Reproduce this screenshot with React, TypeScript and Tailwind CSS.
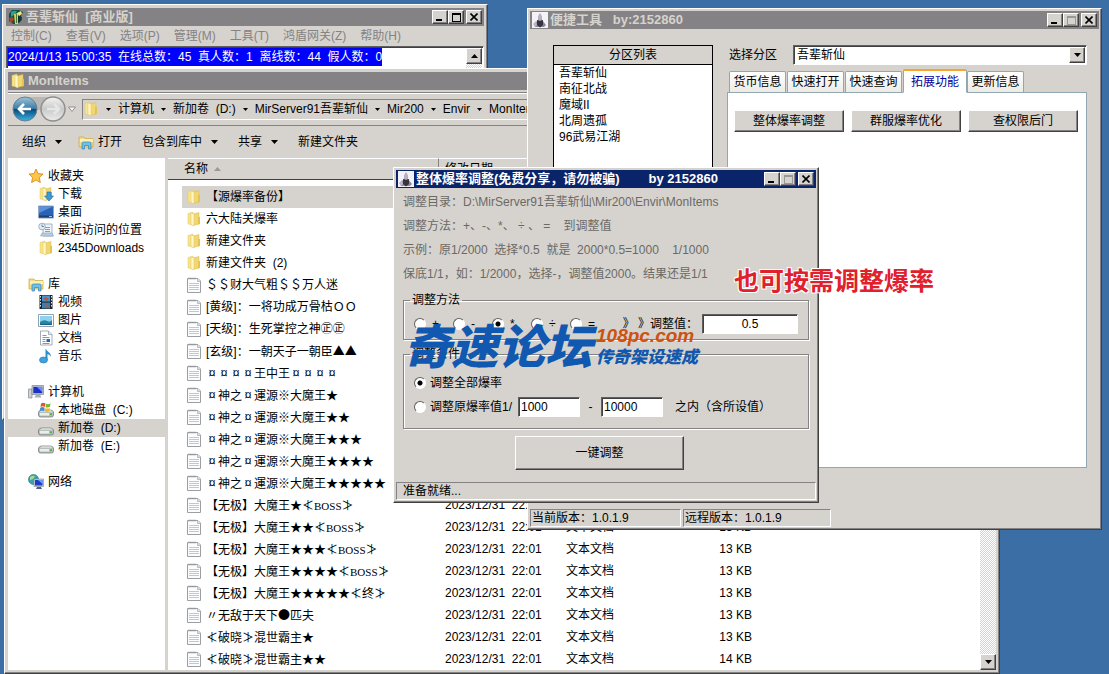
import { Fragment, useState } from "react";
import type { ReactNode } from "react";

const RAISED =
  "border border-t-white border-l-white border-r-[#404040] border-b-[#404040] bg-[#d6d3ce] shadow-[inset_-1px_-1px_0_#848284]";
const SUNKEN =
  "border border-t-[#606060] border-l-[#606060] border-r-white border-b-white bg-white shadow-[inset_1px_1px_0_#404040]";
const STATUS_CELL =
  "border border-t-[#848284] border-l-[#848284] border-r-white border-b-white";
const ETCHED =
  "border border-[#848284] shadow-[1px_1px_0_#fff,inset_1px_1px_0_#fff]";
const SCROLL_TRACK =
  "bg-[#e9e7e3] bg-[repeating-conic-gradient(#d6d3ce_0_25%,#fff_0_50%)] bg-size-[2px_2px]";

const MENUS = ["控制(C)", "查看(V)", "选项(P)", "管理(M)", "工具(T)", "鸿盾网关(Z)", "帮助(H)"];
const CRUMBS = ["计算机", "新加卷  (D:)", "MirServer91吾辈斩仙", "Mir200", "Envir", "MonItems"];
const ZONES = ["吾辈斩仙", "南征北战", "魔域II", "北周遗孤", "96武易江湖"];
const TABS = ["货币信息", "快速打开", "快速查询", "拓展功能", "更新信息"];
const TOOLS = ["整体爆率调整", "群服爆率优化", "查权限后门"];
const OPERATORS = ["+", "-", "*", "÷", "="];
const HINTS = [
  "调整目录：D:\\MirServer91吾辈斩仙\\Mir200\\Envir\\MonItems",
  "调整方法：+、-、*、 ÷ 、 =    到调整值",
  "示例：原1/2000  选择*0.5  就是  2000*0.5=1000    1/1000",
  "保底1/1，如：1/2000，选择-，调整值2000。结果还是1/1",
];

interface FileRow {
  name: string;
  folder?: boolean;
  size: string;
}

const FILES: FileRow[] = [
  { name: "【源爆率备份】", folder: true, size: "" },
  { name: "六大陆关爆率", folder: true, size: "" },
  { name: "新建文件夹", folder: true, size: "" },
  { name: "新建文件夹  (2)", folder: true, size: "" },
  { name: "＄＄财大气粗＄＄万人迷", size: "13 KB" },
  { name: "[黄级]：一将功成万骨枯ＯＯ", size: "13 KB" },
  { name: "[天级]：生死掌控之神㊣㊣", size: "13 KB" },
  { name: "[玄级]：一朝天子一朝臣▲▲", size: "13 KB" },
  { name: "¤¤¤¤王中王¤¤¤¤", size: "13 KB" },
  { name: "¤神之¤運源※大魔王★", size: "13 KB" },
  { name: "¤神之¤運源※大魔王★★", size: "13 KB" },
  { name: "¤神之¤運源※大魔王★★★", size: "13 KB" },
  { name: "¤神之¤運源※大魔王★★★★", size: "13 KB" },
  { name: "¤神之¤運源※大魔王★★★★★", size: "13 KB" },
  { name: "【无极】大魔王★≮BOSS≯", size: "13 KB" },
  { name: "【无极】大魔王★★≮BOSS≯", size: "13 KB" },
  { name: "【无极】大魔王★★★≮BOSS≯", size: "13 KB" },
  { name: "【无极】大魔王★★★★≮BOSS≯", size: "13 KB" },
  { name: "【无极】大魔王★★★★★≮终≯", size: "13 KB" },
  { name: "〃无敌于天下●匹夫", size: "13 KB" },
  { name: "≮破晓≯混世霸主★", size: "13 KB" },
  { name: "≮破晓≯混世霸主★★", size: "14 KB" },
];

type IconName =
  | "star" | "download" | "desktop" | "recent" | "folder" | "library" | "video"
  | "picture" | "document" | "music" | "computer" | "system" | "drive" | "network";

interface NavItem {
  label: string;
  icon: IconName;
}

const NAV: { root: NavItem; children: NavItem[] }[] = [
  {
    root: { label: "收藏夹", icon: "star" },
    children: [
      { label: "下载", icon: "download" },
      { label: "桌面", icon: "desktop" },
      { label: "最近访问的位置", icon: "recent" },
      { label: "2345Downloads", icon: "folder" },
    ],
  },
  {
    root: { label: "库", icon: "library" },
    children: [
      { label: "视频", icon: "video" },
      { label: "图片", icon: "picture" },
      { label: "文档", icon: "document" },
      { label: "音乐", icon: "music" },
    ],
  },
  {
    root: { label: "计算机", icon: "computer" },
    children: [
      { label: "本地磁盘  (C:)", icon: "system" },
      { label: "新加卷  (D:)", icon: "drive" },
      { label: "新加卷  (E:)", icon: "drive" },
    ],
  },
  { root: { label: "网络", icon: "network" }, children: [] },
];

const folderShape = (
  <>
    <path d="M2 2.500 7 1v13l-5-1z" fill="#f7e48f" stroke="#e3c75e" strokeWidth=".5" />
    <path d="M7 3l6-1.500V13l-6 1.500z" fill="#f0d774" stroke="#d9b850" strokeWidth=".5" />
    <path d="M5 2l3 1v12l-3-1.500z" fill="#fff6c4" stroke="#e0c460" strokeWidth=".5" />
    <path d="M12 6h2v7l-2 .5z" fill="#e6c24e" />
  </>
);

const libraryShape = (
  <>
    <path d="M1 3h5l1 1.500h8V13H1z" fill="#f3dc83" stroke="#c9a742" strokeWidth=".7" />
    <path d="M2 5h13v3H2z" fill="#fbf0b8" />
    <path d="M4 15V9.500q0-1.500 1.500-1.500h6q1.500 0 1.500 1.500V15h-2.500v-3.500h-4V15z" fill="#6fc0ea" stroke="#3583b5" strokeWidth=".7" />
  </>
);

const driveShape = (
  <>
    <path d="M.5 10q1-2 3-2h9q2 0 3 2v3q0 2-2 2h-11q-2 0-2-2z" fill="#b9bfbc" stroke="#6d7370" strokeWidth=".7" />
    <path d="M2 9.500q1-1 2-1h9l1.500 1z" fill="#f1f3f2" />
    <path d="M2 11h9v2.500H2z" fill="#eceeed" />
    <circle cx="13" cy="12.300" r="1" fill="#3fae3c" />
  </>
);

const ICONS: Record<IconName, ReactNode> = {
  star: (
    <path d="M8 1l2 4.600 5 .5-3.700 3.400 1 5L8 12l-4.400 2.500 1-5L1 6.100l5-.5z" fill="#fdc54a" stroke="#dc8a1c" strokeWidth=".9" />
  ),
  download: (
    <>
      {folderShape}
      <path d="M9 6h4v4h2.500L11 15 6.500 10H9z" fill="#3d9ad6" stroke="#1e6ba5" strokeWidth=".6" />
    </>
  ),
  desktop: (
    <>
      <path d="M.5 2h15v12H.5z" fill="#2b62b5" stroke="#94a8c2" />
      <path d="M1 2.500h14L1 9z" fill="#5c92da" />
      <path d="M1 11.500h14v2H1z" fill="#1d3e74" />
      <path d="M11 12h3v1h-3z" fill="#9dc2ee" />
    </>
  ),
  recent: (
    <>
      <path d="M5 2h9v9l1 3H5z" fill="#eef4fa" stroke="#8ca3ba" strokeWidth=".8" />
      <path d="M7 5h5v1H7zm0 2h5v1H7zm0 2h5v1H7z" fill="#7fa0c4" />
      <circle cx="4" cy="4.500" r="3.300" fill="#e4edf4" stroke="#8ca3ba" strokeWidth=".8" />
      <path d="M4 2.500v2h2" fill="none" stroke="#44617f" strokeWidth=".7" />
      <path d="M4 11h10l1.500 3H2.500z" fill="#b9cde0" stroke="#8ca3ba" strokeWidth=".6" />
    </>
  ),
  folder: folderShape,
  library: libraryShape,
  video: (
    <>
      <path d="M1.500 1h13v14h-13z" fill="#1b242c" />
      <path d="M4 1.500h8v6H4z" fill="#4996cc" />
      <path d="M4 8.500h8v6H4z" fill="#397fb0" />
      <path d="M5 5l3-2 3 2.500L9 7zM5 12l3-2 3 3z" fill="#b9573f" />
      <path d="M2 2h1v1.500H2zm0 3h1v1.500H2zm0 3h1v1.500H2zm0 3h1v1.500H2zM13 2h1v1.500h-1zm0 3h1v1.500h-1zm0 3h1v1.500h-1zm0 3h1v1.500h-1z" fill="#dfe6ea" />
    </>
  ),
  picture: (
    <>
      <path d="M.5 2.500h15v12H.5z" fill="#fff" stroke="#8fa3b0" />
      <path d="M2 4h12v9H2z" fill="#8fd0f0" />
      <path d="M2 10q4-3 7-1t5-1v5H2z" fill="#24889b" />
      <path d="M2 12h12v1H2z" fill="#1d5d88" />
    </>
  ),
  document: (
    <>
      <path d="M2.500 1h8l3.500 3.500V15H2.500z" fill="#fff" stroke="#8b98a5" strokeWidth=".8" />
      <path d="M10.500 1v3.500H14" fill="#dfe7ee" stroke="#8b98a5" strokeWidth=".7" />
      <path d="M4.500 5h4v1h-4zm0 2h7v1h-7zm0 2h3v1h-3zm0 2h3v1h-3zm0 2h7v1h-7z" fill="#6f9bd0" />
      <path d="M8.500 9H12v3H8.500z" fill="#2b68a8" />
    </>
  ),
  music: (
    <>
      <path d="M8 1c1 3 5 3 5 8-1-2-2-2.500-3.500-3v6h-2V1z" fill="#2d8ecb" />
      <ellipse cx="5.500" cy="12" rx="4" ry="3" fill="#3ea2dc" stroke="#1f72ab" strokeWidth=".6" />
    </>
  ),
  computer: (
    <>
      <path d="M.5 5H4v9H.5z" fill="#cfd2d6" stroke="#83888e" strokeWidth=".7" />
      <path d="M4 1.500h11.500v9H4z" fill="#c9ced5" stroke="#7e858e" strokeWidth=".7" />
      <path d="M5.300 2.800h9v6.400h-9z" fill="#1b2fc9" />
      <path d="M9 3h5v5z" fill="#6f8ff3" />
      <path d="M8 10.500h4l1.500 3h-7z" fill="#a9aeb5" />
    </>
  ),
  system: (
    <>
      {driveShape}
      <path d="M3 1.500q2-1.500 4.500 0L7 5q-2-1.500-4.500 0z" fill="#e2562b" />
      <path d="M8.200 1.800q2 1 4.300-.5L12 4.800q-2 1.200-4.300.4z" fill="#77b82f" />
      <path d="M2.300 5.800q2.200-1.500 4.400 0L6 9.200q-2-1.200-4.400 0z" fill="#3a8fd8" />
      <path d="M7.600 6q2 1.200 4.200 0l-.6 3.200q-2 1-4.200 0z" fill="#f3b820" />
    </>
  ),
  drive: driveShape,
  network: (
    <>
      <circle cx="5.500" cy="5.500" r="5" fill="#36a4b4" stroke="#1a6f7b" strokeWidth=".6" />
      <path d="M2 3q3-2 5-1L5 5 2 6zm4 4l3-1v3l-3 1z" fill="#a6dd8c" />
      <path d="M6 5h9.500v7.500H6z" fill="#cdd3da" stroke="#7e858e" strokeWidth=".6" />
      <path d="M7 6h7.500v5.500H7z" fill="#1b3bc9" />
      <path d="M10 6h4.500v4z" fill="#6fa0f3" />
      <path d="M9 13h4l1 2H8z" fill="#4b5f86" />
    </>
  ),
};

const Icon = ({ name }: { name: IconName }) => (
  <svg className="size-4 shrink-0" viewBox="0 0 16 16" aria-hidden="true">
    {ICONS[name]}
  </svg>
);

const TextFileIcon = () => (
  <svg className="size-4 shrink-0" viewBox="0 0 16 16" aria-hidden="true">
    <path d="M1.500 1.500H12L14.500 4v11.500h-13z" fill="#fbfcfd" stroke="#9b9fa3" />
    <path d="M11.500 1.500v3h3" fill="#dcdfe2" stroke="#a5a9ad" strokeWidth=".7" />
    <path d="M3 6.500h10M3 8.500h10M3 10.500h10M3 12.500h10" stroke="#c0c7d6" />
    <path d="M3 .5v2M5 .5v2M7 .5v2M9 .5v2" stroke="#8d9093" strokeWidth=".8" />
  </svg>
);

const HeroIcon = () => (
  <svg className="size-4 shrink-0 bg-[#f4f2f6]" viewBox="0 0 16 16" aria-hidden="true">
    <path d="M8 1l1.500 3 .5 4 4 5-2 2H3l-1-3 4-4 .5-4z" fill="#8c8799" />
    <path d="M7 2h2l1 5-2 2-2-2z" fill="#b9b1c0" />
    <path d="M5 8l3 1 3-1v5l-3 2.500L5 13z" fill="#37333f" />
    <path d="M1 12l3-3 1 4-2 2z" fill="#bdb2cc" />
  </svg>
);

const ServerIcon = () => (
  <svg className="size-4 shrink-0" viewBox="0 0 16 16" aria-hidden="true">
    <path d="M4 1h7l4 2-2 4 1 4-5 4H5L1 12V5z" fill="#0c4f4c" />
    <path d="M3 3q3-2 6-1L6 6 3 8z" fill="#2f9d93" />
    <path d="M6 5l4-1v11H7z" fill="#e3cf4a" />
    <path d="M9 4l4-2 1 3-3 2z" fill="#f0e878" />
    <path d="M1 9l4-1 1 3-2 1 1 2-3-1z" fill="#a5482e" />
    <path d="M10 7l4 1-2 5-2 1z" fill="#16302c" />
    <path d="M8 5h1v9H8z" fill="#4d7a2a" />
  </svg>
);

const Triangle = ({ up = false, small = false }: { up?: boolean; small?: boolean }) => (
  <svg
    className={small ? "h-[3px] w-[5px] shrink-0" : "h-1 w-[7px] shrink-0"}
    viewBox="0 0 7 4"
    aria-hidden="true"
  >
    <path d={up ? "M0 4h7L3.500 0z" : "M0 0h7L3.500 4z"} fill="#000" />
  </svg>
);

// Symbols whose Latin glyph is narrow, but which take a full cell in a file name
const FULL_CELL = /([¤▲●≮≯])/;

const FileName = ({ name }: { name: string }) => (
  <span className="whitespace-pre">
    {name.split(FULL_CELL).map((part, index) =>
      FULL_CELL.test(part) ? (
        <span key={index} className="inline-block w-3 text-center font-['Noto_Sans_CJK_SC',sans-serif]">
          {part}
        </span>
      ) : (
        <span key={index} className={part === "BOSS" ? "font-['Liberation_Serif',serif] text-[11px]" : ""}>
          {part}
        </span>
      ),
    )}
  </span>
);

interface TitleBarProps {
  title: string;
  icon: ReactNode;
  active?: boolean;
  canMaximize?: boolean;
  controls?: boolean;
}

const TitleBar = ({ title, icon, active, canMaximize, controls = true }: TitleBarProps) => {
  const button = `${RAISED} flex h-[14px] w-4 items-center justify-center`;
  return (
    <header
      className={`flex h-[18px] items-center gap-0.5 px-0.5 ${
        active ? "bg-[#0a246a] text-white" : "bg-[#848284] text-[#d6d3ce]"
      }`}
    >
      {icon}
      <h2 className="flex-1 truncate whitespace-pre text-[13px] leading-[18px] font-bold">{title}</h2>
      {controls ? (
        <div className="flex">
          <button type="button" aria-label="最小化" className={button}>
            <svg className="size-2" viewBox="0 0 8 8"><path d="M0 6h6v2H0z" /></svg>
          </button>
          <button type="button" aria-label="最大化" disabled={!canMaximize} className={button}>
            <svg className="size-[9px]" viewBox="0 0 9 9">
              <path
                d="M0 0h9v9H0zM1 2v6h7V2z"
                fillRule="evenodd"
                fill={canMaximize ? "#000" : "#9a9794"}
              />
            </svg>
          </button>
          <button type="button" aria-label="关闭" className={`${button} ml-0.5`}>
            <svg className="size-2" viewBox="0 0 8 8">
              <path d="M.5 .5l7 7M7.500 .5l-7 7" stroke="#000" strokeWidth="1.600" />
            </svg>
          </button>
        </div>
      ) : null}
    </header>
  );
};

const LogWindow = () => (
  <section className={`${RAISED} absolute top-1 left-0.5 flex h-[416px] w-[486px] flex-col p-[3px]`}>
    <TitleBar title="吾辈斩仙  [商业版]" icon={<ServerIcon />} canMaximize />
    <nav className="flex h-5 items-center gap-[14px] px-[5px] text-[#848284]">
      {MENUS.map((menu) => (
        <button key={menu} type="button">{menu}</button>
      ))}
    </nav>
    <div className={`${SUNKEN} flex flex-1 justify-between p-px`}>
      <p className="h-[18px] bg-[#0000ff] leading-[18px] whitespace-pre text-white">
        2024/1/13 15:00:35  在线总数：45  真人数：1  离线数：44  假人数：0
      </p>
      <div className={`${SCROLL_TRACK} w-4`}>
        <button type="button" aria-label="向上滚动" className={`${RAISED} flex size-4 items-center justify-center`}>
          <Triangle up />
        </button>
      </div>
    </div>
  </section>
);

const AddressBar = () => (
  <div className="flex h-[34px] items-center border-t border-b border-[#848284] pl-1 shadow-[inset_0_1px_0_#fff]">
    <svg className="h-7 w-[70px] shrink-0" viewBox="0 0 70 28" aria-hidden="true">
      <defs>
        <linearGradient id="back" x1="0" y1="0" x2="0" y2="1">
          <stop offset="0" stopColor="#9cc4dc" />
          <stop offset=".48" stopColor="#3d7ca6" />
          <stop offset=".52" stopColor="#0b4a7c" />
          <stop offset="1" stopColor="#39b5e6" />
        </linearGradient>
        <linearGradient id="forward" x1="0" y1="0" x2="0" y2="1">
          <stop offset="0" stopColor="#f4f4f4" />
          <stop offset=".5" stopColor="#c9c9c9" />
          <stop offset="1" stopColor="#ececec" />
        </linearGradient>
      </defs>
      <path d="M13 2h28v10q-14 6-28 0z" fill="#b9b7b4" />
      <circle cx="13" cy="14" r="12" fill="url(#back)" stroke="#6c7f8c" />
      <path d="M7 14h12M12 9l-5 5 5 5" fill="none" stroke="#fff" strokeWidth="2.600" />
      <circle cx="41" cy="14" r="12" fill="url(#forward)" stroke="#8e8e8e" strokeWidth="1.500" />
      <path d="M35 14h12M42 9l5 5-5 5" fill="none" stroke="#e6e6e6" strokeWidth="2.600" />
      <path d="M56.500 12h7L60 16.500z" fill="#f4f4f4" stroke="#808080" strokeWidth=".8" />
    </svg>
    <div className={`${STATUS_CELL} flex h-[21px] flex-1 items-center gap-[7px] whitespace-pre`}>
      <Icon name="folder" />
      {CRUMBS.map((crumb) => (
        <Fragment key={crumb}>
          <Triangle small />
          <button type="button">{crumb}</button>
        </Fragment>
      ))}
    </div>
  </div>
);

const Toolbar = () => (
  <div className="flex h-8 items-center gap-5 pl-[14px]">
    <button type="button" className="flex items-center gap-[9px]">组织<Triangle /></button>
    <button type="button" className="-ml-1 flex items-center gap-1"><Icon name="library" />打开</button>
    <button type="button" className="flex items-center gap-[9px]">包含到库中<Triangle /></button>
    <button type="button" className="flex items-center gap-[9px]">共享<Triangle /></button>
    <button type="button">新建文件夹</button>
  </div>
);

const NavTree = () => (
  <nav className="w-[157px] shrink-0 bg-white pt-[9px]">
    <ul>
      {NAV.map(({ root, children }) => (
        <li key={root.label} className="mb-[18px]">
          <a href="#" className="flex h-[18px] items-center gap-1 pl-5">
            <Icon name={root.icon} />
            {root.label}
          </a>
          <ul>
            {children.map((child) => (
              <li key={child.label}>
                <a
                  href="#"
                  className={`flex h-[18px] items-center gap-1 pl-[30px] whitespace-pre ${
                    child.label.includes("D:") ? "bg-[#d6d3ce]" : ""
                  }`}
                >
                  <Icon name={child.icon} />
                  {child.label}
                </a>
              </li>
            ))}
          </ul>
        </li>
      ))}
    </ul>
  </nav>
);

const FileList = () => (
  <div className="flex flex-1 bg-white">
    <table className="h-min flex-1 table-fixed border-separate border-spacing-0 text-left">
      <colgroup>
        <col className="w-[271px]" />
        <col className="w-[121px]" />
        <col className="w-[110px]" />
        <col className="w-[96px]" />
        <col />
      </colgroup>
      <thead>
        <tr className="h-[22px] bg-[#d6d3ce]">
          <th className="border-t border-r border-b border-t-white border-r-[#848284] border-b-[#404040] pl-4 font-normal">
            <span className="flex items-center gap-1.5">
              名称
              <svg className="h-1 w-[7px]" viewBox="0 0 7 4" aria-hidden="true">
                <path d="M0 4h7L3.500 0z" fill="#9a9794" />
              </svg>
            </span>
          </th>
          <th className="border-t border-b border-t-white border-b-[#404040] pl-[6px] font-normal">修改日期</th>
          <th className="border-t border-b border-t-white border-b-[#404040] pl-[6px] font-normal">类型</th>
          <th className="border-t border-b border-t-white border-b-[#404040] pl-[6px] font-normal">大小</th>
          <th className="border-t border-b border-t-white border-b-[#404040]" />
        </tr>
      </thead>
      <tbody className="before:block before:h-[6px] before:content-['']">
        {FILES.map((file, index) => (
          <tr key={file.name} className="h-[22px]">
            <td className="p-0 pl-[14px]">
              <div className={`flex h-[22px] items-center gap-1 pl-1 ${index === 0 ? "bg-[#d6d3ce]" : ""}`}>
                {file.folder ? <Icon name="folder" /> : <TextFileIcon />}
                <FileName name={file.name} />
              </div>
            </td>
            <td className="p-0 pl-[6px] whitespace-pre">2023/12/31  22:01</td>
            <td className="p-0 pl-[6px]">{file.folder ? "文件夹" : "文本文档"}</td>
            <td className="p-0 pr-[14px] text-right">{file.size}</td>
            <td className="p-0" />
          </tr>
        ))}
      </tbody>
    </table>
    <div className={`${SCROLL_TRACK} flex w-4 flex-col justify-end`}>
      <button type="button" aria-label="向下滚动" className={`${RAISED} flex size-4 items-center justify-center`}>
        <Triangle />
      </button>
    </div>
  </div>
);

const ExplorerWindow = () => (
  <section className={`${RAISED} absolute top-[68px] left-1 w-[996px] p-[3px]`}>
    <TitleBar title="MonItems" icon={<Icon name="folder" />} controls={false} />
    <div className="mt-0.5">
      <AddressBar />
      <Toolbar />
      <div className="flex gap-[3px]">
        <NavTree />
        <FileList />
      </div>
    </div>
  </section>
);

const ToolWindow = () => {
  const [activeTab, setActiveTab] = useState("拓展功能");

  return (
    <section className={`${RAISED} absolute top-2 left-[527px] flex h-[522px] w-[575px] flex-col p-0.5`}>
      <TitleBar title="便捷工具   by:2152860" icon={<HeroIcon />} />
      <div className="flex h-[439px] gap-[14px] pt-4 pr-3 pl-[23px]">
        <div className="w-40 border border-black bg-white">
          <h3 className="h-[19px] border-b border-black bg-[#d6d3ce] text-center leading-[19px]">分区列表</h3>
          <ul className="px-[5px]">
            {ZONES.map((zone) => (
              <li key={zone} className="leading-4">{zone}</li>
            ))}
          </ul>
        </div>
        <div className="flex flex-1 flex-col">
          <div className="mb-1 flex items-center pl-0.5">
            <label htmlFor="zone" className="w-16">选择分区</label>
            <div className="relative flex-1">
              <select id="zone" className={`${SUNKEN} h-5 w-full appearance-none pl-[3px] outline-none`}>
                {ZONES.map((zone) => (
                  <option key={zone}>{zone}</option>
                ))}
              </select>
              <span className={`${RAISED} pointer-events-none absolute top-0.5 right-0.5 flex size-4 items-center justify-center`}>
                <Triangle />
              </span>
            </div>
          </div>
          <div role="tablist" className="flex items-end px-0.5">
            {TABS.map((tab) =>
              tab === activeTab ? (
                <button
                  key={tab}
                  role="tab"
                  aria-selected
                  type="button"
                  className="relative -mb-px h-6 w-16 rounded-t-xs border border-t-2 border-[#91a7b4] border-t-[#f7a52b] border-b-white bg-white text-[#00009c]"
                >
                  {tab}
                </button>
              ) : (
                <button
                  key={tab}
                  role="tab"
                  aria-selected={false}
                  type="button"
                  onClick={() => setActiveTab(tab)}
                  className="mr-px h-[21px] w-[57px] rounded-t-xs border border-b-0 border-[#91a7b4] bg-linear-to-b from-white to-[#ecebe6]"
                >
                  {tab}
                </button>
              ),
            )}
          </div>
          <div className="flex flex-1 items-start gap-[7px] border border-[#91a7b4] bg-white px-[6px] pt-[17px]">
            {TOOLS.map((tool) => (
              <button key={tool} type="button" className={`${RAISED} h-[22px] w-[110px]`}>{tool}</button>
            ))}
          </div>
        </div>
      </div>
      <footer className="mt-auto flex gap-0.5">
        <p className={`${STATUS_CELL} h-[18px] w-[151px] pl-px leading-4`}>当前版本：1.0.1.9</p>
        <p className={`${STATUS_CELL} h-[18px] w-[148px] pl-px leading-4`}>远程版本：1.0.1.9</p>
      </footer>
    </section>
  );
};

const RADIO =
  "size-3 appearance-none rounded-full border border-t-[#606060] border-l-[#606060] border-r-white border-b-white bg-white checked:bg-[radial-gradient(circle,#000_0_2px,#fff_3px)]";

const AdjustDialog = () => (
  <section
    role="dialog"
    aria-label="整体爆率调整"
    className={`${RAISED} absolute top-[167px] left-[393px] w-[426px] p-0.5`}
  >
    <TitleBar active title="整体爆率调整(免费分享，请勿被骗)        by 2152860" icon={<HeroIcon />} />
    <div className="px-[7px] pt-0.5">
      {HINTS.map((hint) => (
        <p key={hint} className="leading-6 whitespace-pre text-[#6b6966]">{hint}</p>
      ))}
      <fieldset className={`${ETCHED} mt-1.5 px-[10px]`}>
        <legend className="-ml-1 px-0.5 leading-4">调整方法</legend>
        <div className="flex h-[31px] items-center">
          {OPERATORS.map((operator) => (
            <label key={operator} className="flex w-[39px] items-center gap-[6px]">
              <input type="radio" name="operator" defaultChecked={operator === "*"} className={RADIO} />
              {operator}
            </label>
          ))}
          <label htmlFor="amount" className="flex-1 text-right whitespace-pre">》 》调整值：</label>
          <input id="amount" defaultValue="0.5" className={`${SUNKEN} ml-1 h-5 w-24 text-center outline-none`} />
        </div>
      </fieldset>
      <fieldset className={`${ETCHED} mt-1.5 px-[10px]`}>
        <legend className="-ml-1 px-0.5 leading-4">调整条件</legend>
        <div className="flex h-[66px] flex-col pt-[9px]">
          <label className="flex h-6 items-center gap-1">
            <input type="radio" name="range" defaultChecked className={RADIO} />
            调整全部爆率
          </label>
          <div className="flex h-6 items-center">
            <label className="flex items-center gap-1">
              <input type="radio" name="range" className={RADIO} />
              调整原爆率值1/
            </label>
            <input aria-label="最小值" defaultValue="1000" className={`${SUNKEN} ml-[6px] h-5 w-[62px] px-0.5 outline-none`} />
            <span className="w-[21px] text-center">-</span>
            <input aria-label="最大值" defaultValue="10000" className={`${SUNKEN} h-5 w-[62px] px-0.5 outline-none`} />
            <span className="ml-3">之内（含所设值）</span>
          </div>
        </div>
      </fieldset>
      <button type="button" className={`${RAISED} mt-[7px] ml-28 block h-[34px] w-[169px]`}>一键调整</button>
    </div>
    <p className={`${STATUS_CELL} mt-3 h-[18px] pl-[6px] leading-4`}>准备就绪...</p>
  </section>
);

const Watermark = () => (
  <div className="pointer-events-none absolute top-[320px] left-[404px] flex items-center gap-1 font-['Noto_Sans_CJK_SC',sans-serif] font-black text-[#1058b0] italic">
    <strong className="text-[47px] leading-[48px] font-black">奇速论坛</strong>
    <div className="flex flex-col pt-1">
      <span className="font-['Liberation_Sans',sans-serif] text-[19px] leading-5 text-[#cc5210]">108pc.com</span>
      <span className="text-[17px] leading-5">传奇架设速成</span>
    </div>
  </div>
);

export default function App() {
  return (
    <main className="relative min-h-screen w-full overflow-hidden bg-[#3a6ea5] font-['Liberation_Sans','Noto_Sans_CJK_SC',sans-serif] text-[12px] leading-4 text-black">
      <LogWindow />
      <ExplorerWindow />
      <ToolWindow />
      <AdjustDialog />
      <Watermark />
      <p className="absolute top-[265px] left-[734px] text-[25px] leading-8 font-bold text-[#e0202c] [text-shadow:1px_1px_0_#fff,-1px_-1px_0_#fff,1px_-1px_0_#fff,-1px_1px_0_#fff]">
        也可按需调整爆率
      </p>
    </main>
  );
}
